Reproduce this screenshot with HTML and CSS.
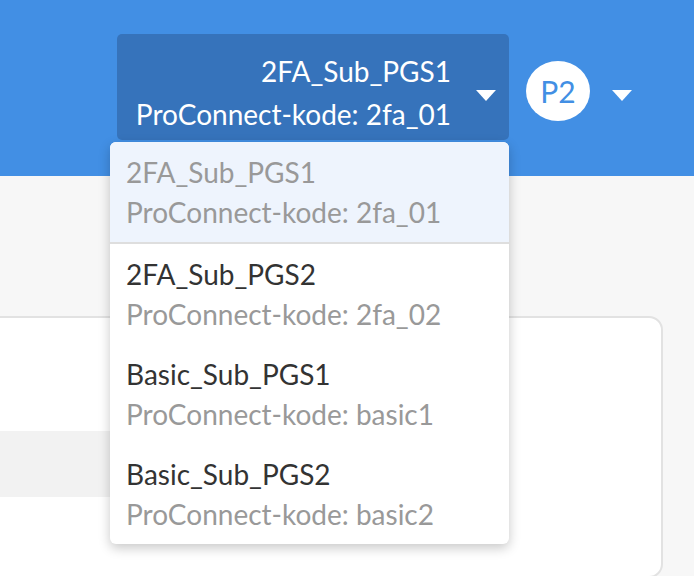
FILE: index.html
```html
<!DOCTYPE html>
<html lang="nb">
<head>
    <meta charset="utf-8" />
    <link rel="stylesheet" href="styles.css">
</head>
<body>
    <div class="header">
        <div class="switcher">
            <a class="current" href="#">
                <span class="current-text">
                    <span class="line">2FA_Sub_PGS1</span>
                    <span class="line">ProConnect-kode: 2fa_01</span>
                </span>
                <span class="caret"></span>
            </a>

            <ul class="menu">
                <li class="selected">
                    <span class="name">2FA_Sub_PGS1</span>
                    <span class="code">ProConnect-kode: 2fa_01</span>
                </li>
                <li>
                    <span class="name">2FA_Sub_PGS2</span>
                    <span class="code">ProConnect-kode: 2fa_02</span>
                </li>
                <li>
                    <span class="name">Basic_Sub_PGS1</span>
                    <span class="code">ProConnect-kode: basic1</span>
                </li>
                <li>
                    <span class="name">Basic_Sub_PGS2</span>
                    <span class="code">ProConnect-kode: basic2</span>
                </li>
            </ul>
        </div>

        <a class="avatar" href="#">P2</a>
        <span class="caret user-caret"></span>
    </div>

    <div class="main">
        <div class="card">
            <div class="card-band"></div>
        </div>
    </div>
</body>
</html>
```

FILE: styles.css
```css
* {
    padding: 0;
    margin: 0;
    box-sizing: border-box;
}

li {
    list-style: none;
}

a {
    text-decoration: none;
}

body {
    background: #f7f7f7;
    font-family: Lato, "Open Sans", sans-serif;
    overflow: hidden;
}

.header {
    height: 176px;
    background: #428fe4;
    display: flex;
    justify-content: flex-end;
    align-items: flex-start;
    padding: 34px 62px 0 0;
}

.switcher {
    position: relative;
}

.current {
    width: 392px;
    height: 106px;
    display: flex;
    align-items: center;
    justify-content: flex-end;
    padding: 16px 13px 4px 16px;
    background: #3673bb;
    border-radius: 5px;
    color: #fff;
    white-space: nowrap;
}

.current-text {
    text-align: right;
    font-size: 28px;
    line-height: 43px;
}

.line {
    display: block;
}

.caret {
    width: 0;
    height: 0;
    border-left: 10px solid transparent;
    border-right: 10px solid transparent;
    border-top: 11px solid #fff;
}

.current .caret {
    margin: 4px 0 0 25px;
}

.avatar {
    width: 64px;
    height: 60px;
    margin: 27px 0 0 17px;
    border-radius: 50%;
    background: #fff;
    color: #428fe4;
    font-size: 30px;
    display: flex;
    align-items: center;
    justify-content: center;
}

.user-caret {
    margin: 56px 0 0 22px;
}

.menu {
    position: absolute;
    top: 108px;
    left: -7px;
    right: 0;
    z-index: 3;
    background: #fff;
    border-radius: 6px;
    box-shadow: 0 4px 12px rgba(0, 0, 0, 0.22);
    overflow: hidden;
    white-space: nowrap;
}

.menu li {
    height: 100px;
    padding: 10px 16px;
    font-size: 28px;
    line-height: 40px;
}

.menu li span {
    display: block;
}

.menu .selected {
    height: 102px;
    background: #eef4fd;
    border-bottom: 2px solid #dedede;
}

.menu .name {
    color: #333;
}

.menu .code,
.menu .selected .name {
    color: #999;
}

.main {
    padding-top: 140px;
}

.card {
    width: 683px;
    height: 262px;
    margin-left: -20px;
    padding-top: 113px;
    background: #fff;
    border: 2px solid #e2e2e2;
    border-radius: 14px;
}

.card-band {
    width: 340px;
    height: 66px;
    background: #f2f2f2;
}
```
